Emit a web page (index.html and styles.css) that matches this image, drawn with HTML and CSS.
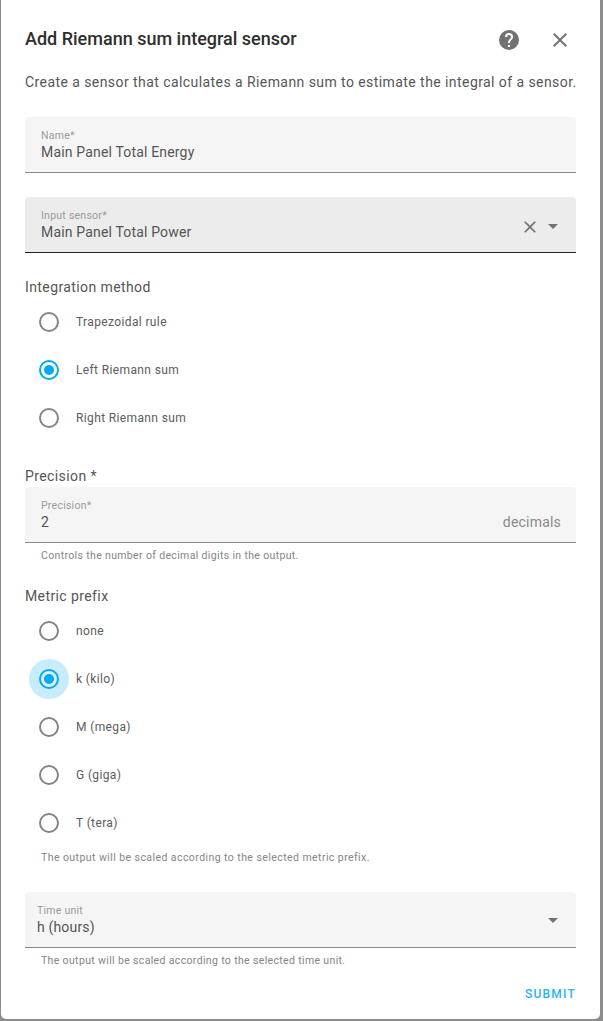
FILE: index.html
```html
<!DOCTYPE html>
<html lang="en">
<head>
<meta charset="utf-8">
<title>Add Riemann sum integral sensor</title>
<link rel="stylesheet" href="styles.css">
</head>
<body>
<div class="dialog">
  <header class="head">
    <h1 class="title">Add Riemann sum integral sensor</h1>
    <svg class="icon help" viewBox="0 0 24 24"><path d="M15.07,11.25L14.17,12.17C13.45,12.89 13,13.5 13,15H11V14.5C11,13.39 11.45,12.39 12.17,11.67L13.41,10.41C13.78,10.05 14,9.55 14,9C14,7.89 13.1,7 12,7A2,2 0 0,0 10,9H8A4,4 0 0,1 12,5A4,4 0 0,1 16,9C16,9.88 15.64,10.67 15.07,11.25M13,19H11V17H13M12,2A10,10 0 0,0 2,12A10,10 0 0,0 12,22A10,10 0 0,0 22,12C22,6.47 17.5,2 12,2Z"/></svg>
    <svg class="icon close" viewBox="0 0 24 24"><path d="M19,6.41L17.59,5L12,10.59L6.41,5L5,6.41L10.59,12L5,17.59L6.41,19L12,13.41L17.59,19L19,17.59L13.41,12L19,6.41Z"/></svg>
  </header>
  <p class="desc">Create a sensor that calculates a Riemann sum to estimate the integral of a sensor.</p>

  <div class="field name-field">
    <div class="field-text"><span class="float">Name*</span><span class="value">Main Panel Total Energy</span></div>
  </div>

  <div class="field active sensor-field">
    <div class="field-text"><span class="float">Input sensor*</span><span class="value">Main Panel Total Power</span></div>
    <svg class="icon clear" viewBox="0 0 24 24"><path d="M19,6.41L17.59,5L12,10.59L6.41,5L5,6.41L10.59,12L5,17.59L6.41,19L12,13.41L17.59,19L19,17.59L13.41,12L19,6.41Z"/></svg>
    <svg class="icon arrow" viewBox="0 0 24 24"><path d="M7,10L12,15L17,10H7Z"/></svg>
  </div>

  <div class="group-label method-label">Integration method</div>
  <div class="radios">
    <div class="radio"><span class="dot"></span><span class="radio-label">Trapezoidal rule</span></div>
    <div class="radio on"><span class="dot"></span><span class="radio-label">Left Riemann sum</span></div>
    <div class="radio"><span class="dot"></span><span class="radio-label">Right Riemann sum</span></div>
  </div>

  <div class="group-label precision-label">Precision *</div>
  <div class="field precision-field">
    <div class="field-text"><span class="float">Precision*</span><span class="value">2</span></div>
    <span class="suffix">decimals</span>
  </div>
  <p class="helper">Controls the number of decimal digits in the output.</p>

  <div class="group-label prefix-label">Metric prefix</div>
  <div class="radios">
    <div class="radio"><span class="dot"></span><span class="radio-label">none</span></div>
    <div class="radio on focus"><span class="dot"></span><span class="radio-label">k (kilo)</span></div>
    <div class="radio"><span class="dot"></span><span class="radio-label">M (mega)</span></div>
    <div class="radio"><span class="dot"></span><span class="radio-label">G (giga)</span></div>
    <div class="radio"><span class="dot"></span><span class="radio-label">T (tera)</span></div>
  </div>
  <p class="helper prefix-helper">The output will be scaled according to the selected metric prefix.</p>

  <div class="field time-field">
    <div class="field-text"><span class="float">Time unit</span><span class="value">h (hours)</span></div>
    <svg class="icon arrow" viewBox="0 0 24 24"><path d="M7,10L12,15L17,10H7Z"/></svg>
  </div>
  <p class="helper">The output will be scaled according to the selected time unit.</p>

  <div class="actions"><span class="submit">SUBMIT</span></div>
</div>
</body>
</html>
```
FILE: styles.css
```css
* { box-sizing: border-box; }
html, body { margin: 0; height: 100%; }
body {
  width: 603px;
  height: 1021px;
  overflow: hidden;
  background: #8c8c8c;
  font-family: Roboto, "Liberation Sans", sans-serif;
  color: #212121;
}
.dialog {
  width: 599px;
  height: 1019px;
  margin-left: 1px;
  padding: 0 24px;
  background: #fff;
  border-radius: 0 0 5px 5px;
}
.head {
  display: flex;
  align-items: center;
  height: 72px;
  padding-top: 8px;
}
.title {
  flex: 1;
  margin: 0 0 3px;
  font-size: 18px;
  line-height: 24px;
  font-weight: 500;
  color: #2e2e2e;
}
.icon { display: block; fill: #727272; flex: none; }
.help { width: 24px; height: 24px; margin-right: 27px; }
.close { width: 24px; height: 24px; margin-right: 4px; }
.desc {
  margin: 0;
  height: 45px;
  font-size: 14px;
  line-height: 20px;
  letter-spacing: 0.43px;
  color: #565656;
  white-space: nowrap;
}
.field {
  display: flex;
  align-items: center;
  height: 56px;
  padding: 0 15px 0 16px;
  background: #f5f5f5;
  border-bottom: 1px solid #8a8a8a;
  border-radius: 4px 4px 0 0;
}
.field.active { background: #ececec; border-bottom-color: #212121; }
.field-text { flex: 1; align-self: flex-start; display: flex; flex-direction: column; padding-top: 12px; }
.float {
  font-size: 10.5px;
  line-height: 14px;
  letter-spacing: 0.25px;
  color: #9a9a9a;
}
.value {
  margin-top: -1px;
  font-size: 14px;
  line-height: 20px;
  letter-spacing: 0.17px;
  color: #555;
}
.sensor-field { margin-top: 24px; padding-right: 12px; }
.clear { width: 20px; height: 20px; margin: 4px 1px 0 0; }
.arrow { width: 24px; height: 24px; margin-right: -1px; }
.sensor-field .arrow { margin-top: 3px; }
.time-field .arrow { margin-top: 1px; }
.group-label {
  font-size: 14px;
  line-height: 20px;
  letter-spacing: 0.4px;
  color: #555;
}
.method-label { margin-top: 24px; }
.radios { display: flex; flex-direction: column; padding-top: 1px; }
.radio { display: flex; align-items: center; height: 48px; }
.dot {
  position: relative;
  flex: none;
  width: 20px;
  height: 20px;
  margin-left: 14px;
  border: 2px solid #858585;
  border-radius: 50%;
}
.radio.on .dot { border-color: #03a9f4; }
.radio.on .dot::after {
  content: "";
  position: absolute;
  inset: 3px;
  border-radius: 50%;
  background: #03a9f4;
}
.radio.focus .dot {
  background: #d8f1fd;
  box-shadow: 0 0 0 10px #c9ecfc;
}
.radio-label {
  margin-left: 17px;
  font-size: 12px;
  letter-spacing: 0.37px;
  color: #5c5c5c;
}
.precision-label { margin-top: 24px; }
.precision-field { margin-top: 1px; }
.suffix { padding-top: 15px; font-size: 14px; letter-spacing: 0.2px; color: #8a8a8a; }
.helper {
  margin: 0;
  padding: 6px 16px 0;
  height: 24px;
  font-size: 10.5px;
  line-height: 14px;
  letter-spacing: 0.35px;
  color: #858585;
}
.prefix-label { margin-top: 19px; }
.helper.prefix-helper { padding-top: 4px; height: 21px; letter-spacing: 0.43px; }
.time-field { margin-top: 24px; padding-left: 12px; padding-right: 12px; }
.actions { display: flex; justify-content: flex-end; margin-top: 14px; }
.submit {
  font-size: 12px;
  line-height: 16px;
  font-weight: 500;
  letter-spacing: 1.2px;
  color: #29b3f5;
}
```
